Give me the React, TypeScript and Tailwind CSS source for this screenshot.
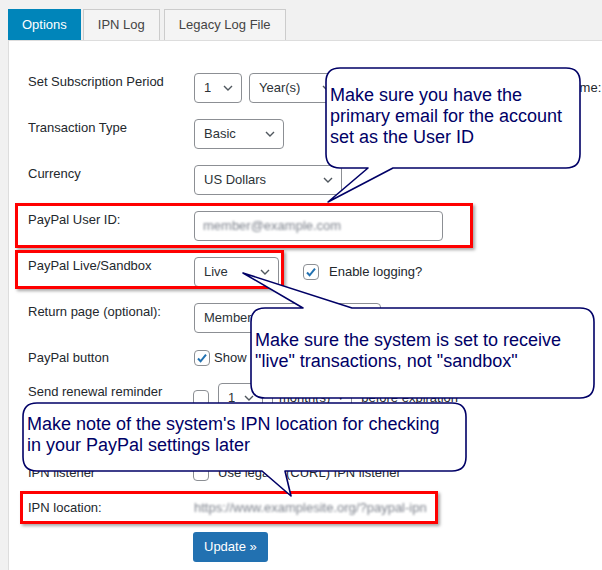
import React from "react";

interface SelectProps {
	value: string;
	width: string;
}

function Select(props: SelectProps) {
	return (
		<div
			className={`flex items-center justify-between h-[30px] pl-[9px] pr-[8px] border border-[#8c8f94] rounded-[4px] bg-white text-[13px] text-[#2c3338] shrink-0 ${props.width}`}
		>
			<span className="whitespace-nowrap overflow-hidden">{props.value}</span>
			<svg width="10" height="6" viewBox="0 0 10 6" className="shrink-0 ml-1">
				<path d="M1 1l4 4 4-4" fill="none" stroke="#50575e" strokeWidth="1.4" />
			</svg>
		</div>
	);
}

function Checkbox({ checked }: { checked?: boolean }) {
	return (
		<span className="w-[16px] h-[16px] border border-[#8c8f94] rounded-[4px] bg-white flex items-center justify-center shrink-0">
			{checked && (
				<svg width="12" height="12" viewBox="0 0 12 12">
					<path d="M2 6.5l2.6 2.8L10 2.6" fill="none" stroke="#2271b1" strokeWidth="2" />
				</svg>
			)}
		</span>
	);
}

function Label({ text }: { text: string }) {
	return <div className="w-[166px] shrink-0 text-[13px] leading-[17px] text-[#23282d]">{text}</div>;
}

function RedBox({ className }: { className: string }) {
	return (
		<div
			className={`absolute border-[3px] border-[#ff0000] shadow-[2px_2px_3px_rgba(0,0,0,0.35)] pointer-events-none ${className}`}
		/>
	);
}

export default function App() {
	return (
		<div className="relative w-[602px] h-[570px] overflow-hidden bg-[#f1f1f1] font-['Liberation_Sans',Arial,sans-serif]">
			{/* tabs */}
			<div className="flex gap-[2px] pl-[8px] pt-[9px] h-[40px] text-[13px]">
				<div className="h-[31px] px-[14px] flex items-center bg-[#0085ba] text-white">Options</div>
				<div className="h-[31px] px-[14px] flex items-center bg-[#f4f4f4] border border-b-0 border-[#cccccc] text-[#444]">
					IPN Log
				</div>
				<div className="h-[31px] px-[14px] flex items-center bg-[#f4f4f4] border border-b-0 border-[#cccccc] text-[#444] ml-[2px]">
					Legacy Log File
				</div>
			</div>

			{/* panel */}
			<div className="ml-[8px] h-[530px] bg-white border-t border-l border-[#dddddd] pt-[32px] pl-[19px]">
				<div className="flex h-[46px] items-start whitespace-nowrap">
					<Label text="Set Subscription Period" />
					<div className="flex items-center gap-[7px]">
						<Select value="1" width="w-[48px]" />
						<Select value="Year(s)" width="w-[92px]" />
						<span className="ml-[142px] text-[13px] text-[#23282d]">Subscription name:</span>
					</div>
				</div>
				<div className="flex h-[46px] items-start">
					<Label text="Transaction Type" />
					<Select value="Basic" width="w-[90px]" />
				</div>
				<div className="flex h-[46px] items-start">
					<Label text="Currency" />
					<Select value="US Dollars" width="w-[148px]" />
				</div>
				<div className="flex h-[46px] items-start">
					<Label text="PayPal User ID:" />
					<div className="w-[249px] h-[30px] border border-[#8c8f94] rounded-[4px] flex items-center pl-[8px]">
						<span className="text-[13px] text-[#7d828c] blur-[1.2px]">member@example.com</span>
					</div>
				</div>
				<div className="flex h-[46px] items-start">
					<Label text="PayPal Live/Sandbox" />
					<Select value="Live" width="w-[85px]" />
					<div className="flex items-center gap-[10px] ml-[24px] h-[30px] text-[13px] text-[#23282d]">
						<Checkbox checked />
						<span>Enable logging?</span>
					</div>
				</div>
				<div className="flex h-[46px] items-start">
					<Label text="Return page (optional):" />
					<Select value="Membership Account" width="w-[187px]" />
				</div>
				<div className="flex h-[34px] items-start">
					<Label text="PayPal button" />
					<div className="flex items-center gap-[4px] h-[17px] text-[13px] text-[#23282d]">
						<Checkbox checked />
						<span>Show PayPal button</span>
					</div>
				</div>
				<div className="flex h-[40px] items-start whitespace-nowrap">
					<Label text="Send renewal reminder" />
					<div className="flex items-center gap-[9px] h-[30px] text-[13px] text-[#23282d] -ml-px">
						<Checkbox />
						<Select value="1" width="w-[45px]" />
						<div className="flex items-center gap-[6px] h-[22px] border border-[#8c8f94] rounded-[3px] px-[6px]">
							month(s)
							<span className="text-[9px]">▼</span>
						</div>
						<span>before expiration</span>
					</div>
				</div>
				<div className="flex h-[41px] items-center">
					<Label text="Cancel reminder" />
					<Checkbox />
				</div>
				<div className="flex h-[35px] items-start">
					<Label text="IPN listener" />
					<div className="flex items-center gap-[9px] h-[17px] text-[13px] text-[#23282d] -ml-px">
						<Checkbox />
						<span>Use legacy (CURL) IPN listener</span>
					</div>
				</div>
				<div className="flex h-[33px] items-start">
					<Label text="IPN location:" />
					<span className="text-[13px] leading-[17px] text-[#7d828c] blur-[1.2px] whitespace-nowrap">
						https://www.examplesite.org/?paypal-ipn
					</span>
				</div>
				<div className="pl-[166px] -ml-px">
					<button className="h-[30px] px-[11px] rounded-[3px] bg-[#2271b1] text-white text-[13px]">Update »</button>
				</div>
			</div>

			{/* annotations */}
			<RedBox className="left-[15px] top-[203px] w-[458px] h-[45px]" />
			<RedBox className="left-[15px] top-[250px] w-[269px] h-[39px]" />
			<RedBox className="left-[20px] top-[491px] w-[418px] h-[33px]" />

			<svg className="absolute left-0 top-0 pointer-events-none" width="602" height="570" viewBox="0 0 602 570">
				<g fill="#ffffff" stroke="#000066" strokeWidth="1.6" strokeLinejoin="round">
					<path d="M340 68 H566 Q580 68 580 82 V154 Q580 168 566 168 H393 L328 202 L368 168 H340 Q326 168 326 154 V82 Q326 68 340 68 Z" />
					<path d="M265 308 H303 L243 273 L352 308 H580 Q594 308 594 322 V384 Q594 398 580 398 H265 Q251 398 251 384 V322 Q251 308 265 308 Z" />
					<path d="M37 403 H452 Q466 403 466 417 V457 Q466 471 452 471 H285 L291 496 L262 471 H37 Q23 471 23 457 V417 Q23 403 37 403 Z" />
				</g>
			</svg>
			<div className="absolute left-[330px] top-[85px] text-[18px] leading-[21px] text-[#000066] whitespace-nowrap">
				Make sure you have the
				<br />
				primary email for the account
				<br />
				set as the User ID
			</div>
			<div className="absolute left-[255px] top-[330px] text-[18px] leading-[21px] text-[#000066] whitespace-nowrap">
				Make sure the system is set to receive
				<br />
				"live" transactions, not "sandbox"
			</div>
			<div className="absolute left-[27px] top-[414px] text-[18px] leading-[21px] text-[#000066] whitespace-nowrap">
				Make note of the system's IPN location for checking
				<br />
				in your PayPal settings later
			</div>
		</div>
	);
}
